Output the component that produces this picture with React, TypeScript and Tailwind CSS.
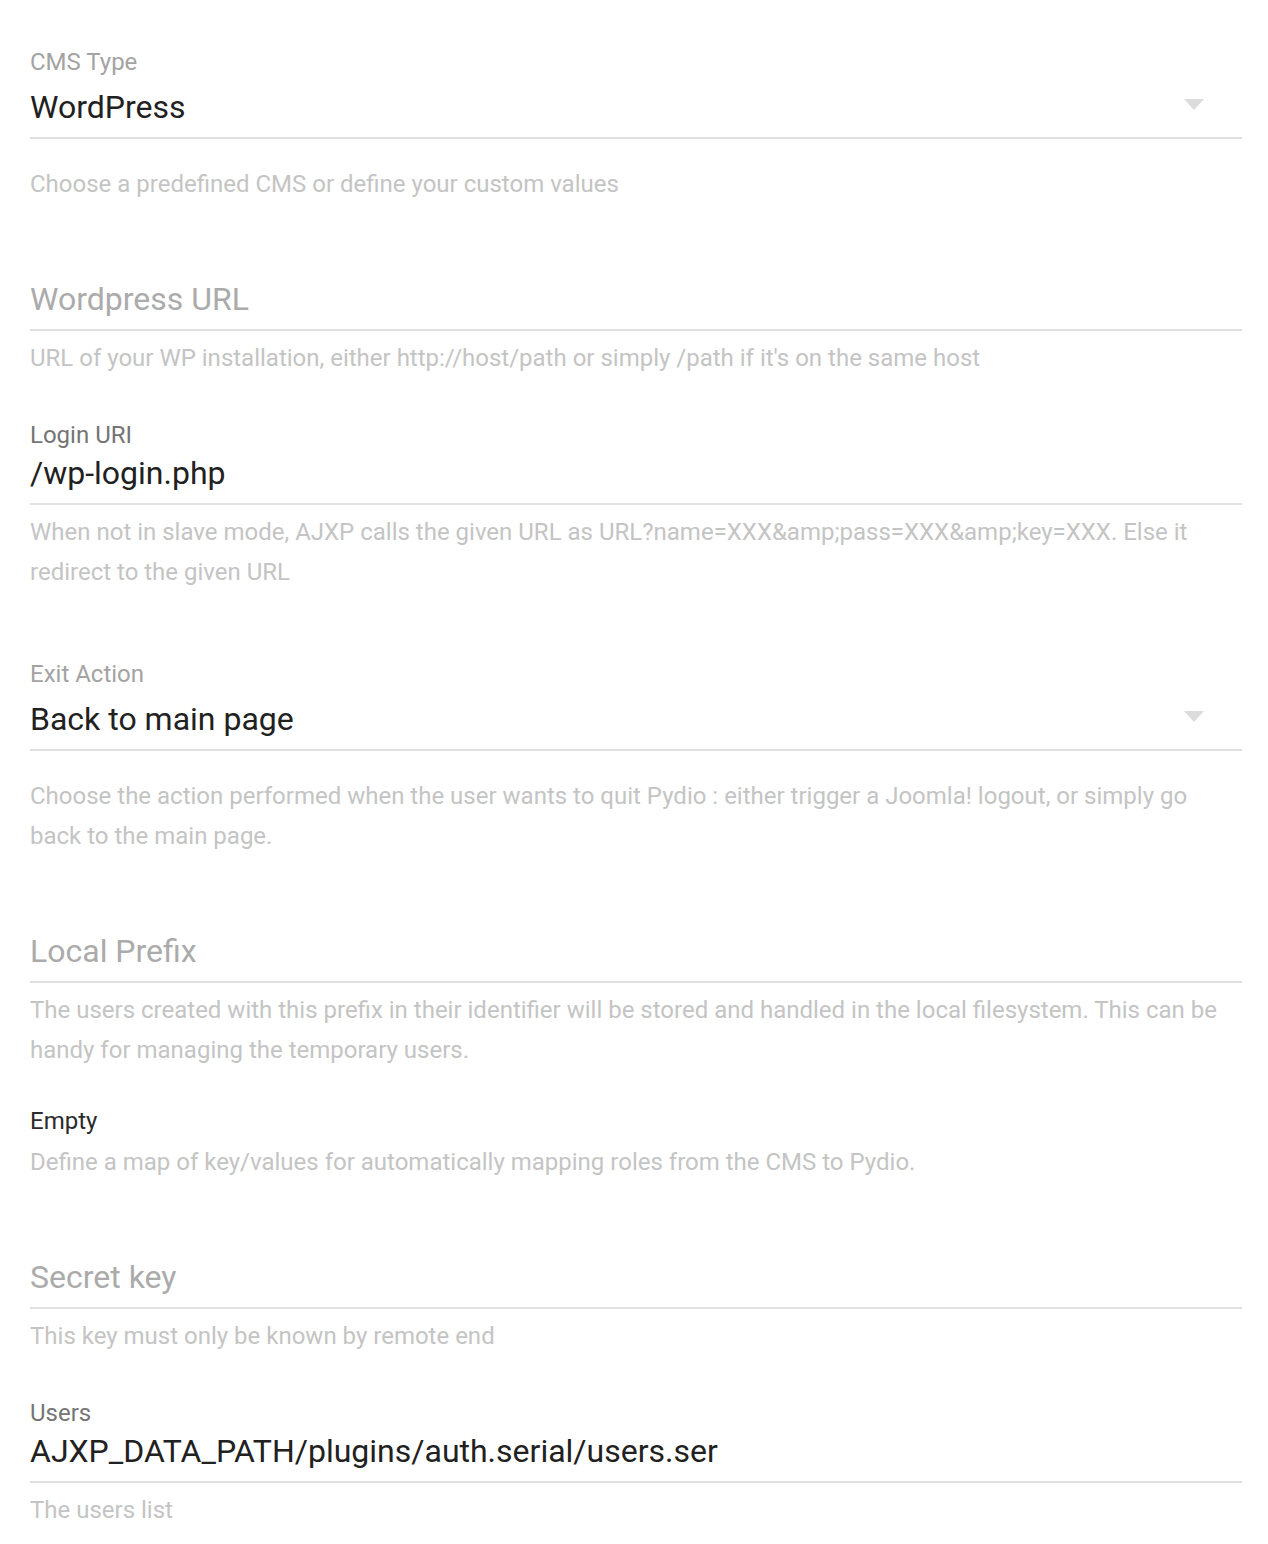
const Help = ({ children, className = '' }: { children: React.ReactNode; className?: string }) => (
  <p className={`text-[24px] leading-[40px] text-[#c4c4c4] ${className}`}>{children}</p>
);

const Line = ({ className = '' }: { className?: string }) => (
  <div className={`h-[2px] bg-[#e0e0e0] ${className}`} />
);

const Arrow = () => (
  <svg width="20" height="11" viewBox="0 0 20 11" className="absolute right-[38px] top-[12px]">
    <polygon points="0,0 20,0 10,11" fill="#dcdcdc" />
  </svg>
);

const SelectField = ({ label, value, help, className = '' }: { label: string; value: string; help: React.ReactNode; className?: string }) => (
  <div className={className}>
    <div className="text-[24px] leading-[30px] text-[#a3a3a3]">{label}</div>
    <div className="relative mt-[10px] text-[32px] leading-[40px] text-[#212121]">
      {value}
      <Arrow />
    </div>
    <Line className="mt-[10px]" />
    <Help className="mt-[25px]">{help}</Help>
  </div>
);

const ValueField = ({ label, value, help, className = '' }: { label: string; value: string; help: React.ReactNode; className?: string }) => (
  <div className={className}>
    <div className="text-[24px] leading-[30px] text-[#757575]">{label}</div>
    <div className="mt-[3px] text-[32px] leading-[40px] text-[#212121]">{value}</div>
    <Line className="mt-[10px]" />
    <Help className="mt-[7px]">{help}</Help>
  </div>
);

const EmptyField = ({ placeholder, help, className = '' }: { placeholder: string; help: React.ReactNode; className?: string }) => (
  <div className={className}>
    <div className="text-[32px] leading-[40px] text-[#ababab]">{placeholder}</div>
    <Line className="mt-[10px]" />
    <Help className="mt-[7px]">{help}</Help>
  </div>
);

export default function App() {
  return (
    <div className="min-h-[1544px] bg-white pl-[30px] pr-[26px] font-['Roboto',sans-serif]">
      <SelectField
        className="pt-[47px]"
        label="CMS Type"
        value="WordPress"
        help="Choose a predefined CMS or define your custom values"
      />
      <EmptyField
        className="mt-[75px]"
        placeholder="Wordpress URL"
        help="URL of your WP installation, either http://host/path or simply /path if it's on the same host"
      />
      <ValueField
        className="mt-[42px]"
        label="Login URI"
        value="/wp-login.php"
        help={'When not in slave mode, AJXP calls the given URL as URL?name=XXX&amp;pass=XXX&amp;key=XXX. Else it redirect to the given URL'}
      />
      <SelectField
        className="mt-[67px]"
        label="Exit Action"
        value="Back to main page"
        help="Choose the action performed when the user wants to quit Pydio : either trigger a Joomla! logout, or simply go back to the main page."
      />
      <EmptyField
        className="mt-[75px]"
        placeholder="Local Prefix"
        help="The users created with this prefix in their identifier will be stored and handled in the local filesystem. This can be handy for managing the temporary users."
      />
      <div className="mt-[36px]">
        <div className="text-[24px] leading-[30px] text-[#2b2b2b]">Empty</div>
        <Help className="mt-[6px]">Define a map of key/values for automatically mapping roles from the CMS to Pydio.</Help>
      </div>
      <EmptyField
        className="mt-[75px]"
        placeholder="Secret key"
        help="This key must only be known by remote end"
      />
      <ValueField
        className="mt-[42px]"
        label="Users"
        value="AJXP_DATA_PATH/plugins/auth.serial/users.ser"
        help="The users list"
      />
    </div>
  );
}
